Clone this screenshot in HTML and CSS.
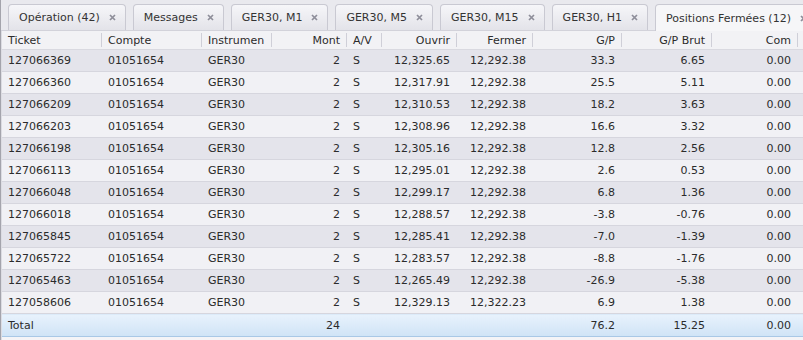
FILE: index.html
```html
<!DOCTYPE html>
<html lang="fr">
<head>
  <meta charset="UTF-8">
  <title>Positions Fermées</title>
  <link rel="stylesheet" href="styles.css">
</head>
<body>
  <div class="panel">
    <ul class="tabs">
      <li class="tab">Opération (42) <span class="close"><svg width="7" height="7" viewBox="0 0 7 7"><path d="M1 1L6 6M6 1L1 6"/></svg></span></li>
      <li class="tab">Messages <span class="close"><svg width="7" height="7" viewBox="0 0 7 7"><path d="M1 1L6 6M6 1L1 6"/></svg></span></li>
      <li class="tab">GER30, M1 <span class="close"><svg width="7" height="7" viewBox="0 0 7 7"><path d="M1 1L6 6M6 1L1 6"/></svg></span></li>
      <li class="tab">GER30, M5 <span class="close"><svg width="7" height="7" viewBox="0 0 7 7"><path d="M1 1L6 6M6 1L1 6"/></svg></span></li>
      <li class="tab">GER30, M15 <span class="close"><svg width="7" height="7" viewBox="0 0 7 7"><path d="M1 1L6 6M6 1L1 6"/></svg></span></li>
      <li class="tab">GER30, H1 <span class="close"><svg width="7" height="7" viewBox="0 0 7 7"><path d="M1 1L6 6M6 1L1 6"/></svg></span></li>
      <li class="tab active">Positions Fermées (12) <span class="close"><svg width="7" height="7" viewBox="0 0 7 7"><path d="M1 1L6 6M6 1L1 6"/></svg></span></li>
    </ul>

    <table class="grid">
      <colgroup>
        <col style="width:100px"><col style="width:100px"><col style="width:70px"><col style="width:75px">
        <col style="width:35px"><col style="width:75px"><col style="width:76px"><col style="width:89px">
        <col style="width:90px"><col style="width:86px"><col>
      </colgroup>
      <thead>
        <tr>
          <th>Ticket</th><th>Compte</th><th>Instrumen</th><th class="num">Mont</th><th>A/V</th>
          <th class="num">Ouvrir</th><th class="num">Fermer</th><th class="num">G/P</th>
          <th class="num">G/P Brut</th><th class="num">Com</th><th class="fill"></th>
        </tr>
      </thead>
      <tbody id="rows"></tbody>
      <tfoot>
        <tr>
          <td>Total</td><td></td><td></td><td class="num">24</td><td></td><td></td><td></td>
          <td class="num">76.2</td><td class="num">15.25</td><td class="num">0.00</td><td></td>
        </tr>
      </tfoot>
    </table>
  </div>

  <script>
    const positions = [
      ['127066369', '12,325.65', '12,292.38', '33.3', '6.65'],
      ['127066360', '12,317.91', '12,292.38', '25.5', '5.11'],
      ['127066209', '12,310.53', '12,292.38', '18.2', '3.63'],
      ['127066203', '12,308.96', '12,292.38', '16.6', '3.32'],
      ['127066198', '12,305.16', '12,292.38', '12.8', '2.56'],
      ['127066113', '12,295.01', '12,292.38', '2.6', '0.53'],
      ['127066048', '12,299.17', '12,292.38', '6.8', '1.36'],
      ['127066018', '12,288.57', '12,292.38', '-3.8', '-0.76'],
      ['127065845', '12,285.41', '12,292.38', '-7.0', '-1.39'],
      ['127065722', '12,283.57', '12,292.38', '-8.8', '-1.76'],
      ['127065463', '12,265.49', '12,292.38', '-26.9', '-5.38'],
      ['127058606', '12,329.13', '12,322.23', '6.9', '1.38']
    ];

    const tbody = document.getElementById('rows');
    positions.forEach(p => {
      const tr = document.createElement('tr');
      tr.innerHTML =
        '<td>' + p[0] + '</td><td>01051654</td><td>GER30</td><td class="num">2</td><td>S</td>' +
        '<td class="num">' + p[1] + '</td><td class="num">' + p[2] + '</td>' +
        '<td class="num">' + p[3] + '</td><td class="num">' + p[4] + '</td>' +
        '<td class="num">0.00</td><td></td>';
      tbody.appendChild(tr);
    });
  </script>
</body>
</html>
```

FILE: styles.css
```css
body {
  margin: 0;
  padding: 0;
  font-family: "DejaVu Sans", Verdana, sans-serif;
  font-size: 11px;
  color: #2b2b2b;
  background-color: #f4f4f7;
}

.panel {
  border-left: 1px solid #a4a4ac;
  box-shadow: inset 1px 0 0 #dcdce2;
  height: 340px;
  overflow: hidden;
}

.tabs {
  list-style: none;
  margin: 0;
  padding: 4px 0 0 7px;
  height: 26px;
  display: flex;
  gap: 7px;
  background-color: #e9e9ee;
  border-bottom: 1px solid #d2d2da;
  white-space: nowrap;
}

.tab {
  display: flex;
  align-items: center;
  gap: 9px;
  padding: 0 9px 0 10px;
  height: 25px;
  border: 1px solid #c9c9d2;
  border-bottom: none;
  border-radius: 4px 4px 0 0;
  background: linear-gradient(#f6f6f9, #e3e3e9);
  color: #333;
}

.tab.active {
  background: #f6f6f8;
  height: 26px;
  margin-bottom: -1px;
}

.close {
  display: flex;
}

.close path {
  stroke: #8e8e9a;
  stroke-width: 1.7;
  fill: none;
}

.grid {
  width: 100%;
  table-layout: fixed;
  border-collapse: collapse;
  margin-left: 1px;
}

.grid th {
  height: 18px;
  padding: 0 7px 0 6px;
  font-weight: normal;
  text-align: left;
  background-color: #f2f2f5;
  background-image: linear-gradient(#cfcfd8, #cfcfd8);
  background-repeat: no-repeat;
  background-position: right center;
  background-size: 1px 14px;
  border-bottom: 1px solid #d9d9e0;
  white-space: nowrap;
  overflow: hidden;
}

.grid th.fill {
  background-image: none;
}

.grid td {
  height: 21px;
  padding: 0 7px 0 6px;
  white-space: nowrap;
  overflow: hidden;
  border-top: 1px solid #fbfbfd;
  border-bottom: 1px solid #d6d6de;
}

.grid tbody tr:nth-child(odd) td {
  background-color: #e4e4eb;
}

.grid tbody tr:nth-child(even) td {
  background-color: #f1f1f5;
}

.grid .num {
  text-align: right;
}

.grid tfoot td {
  height: 22px;
  background: linear-gradient(#e8f2fc, #cfe3f6);
  border-top: 1px solid #c4daf0;
  border-bottom: 1px solid #a9c8e6;
}
```
